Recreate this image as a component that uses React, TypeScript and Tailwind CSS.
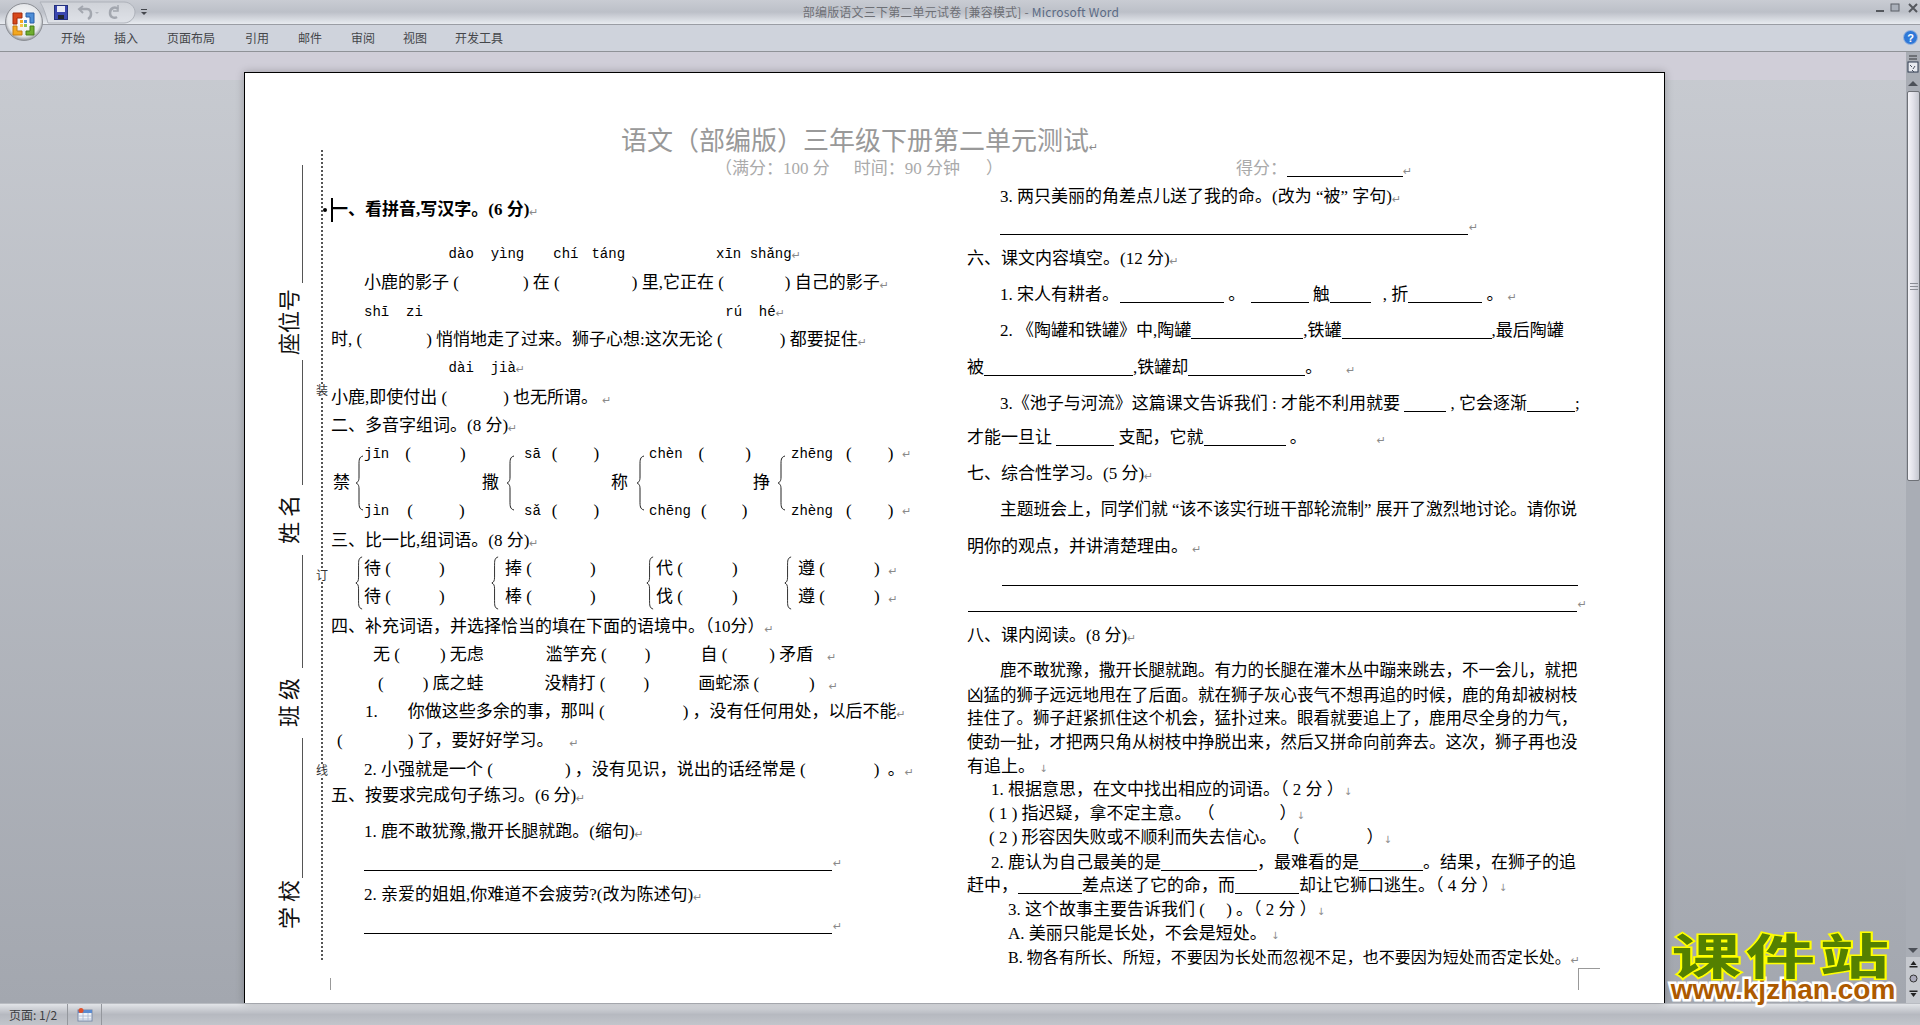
import React from "react";

const R = ({ c = "" }: { c?: string }) => (
  <span className={"inline-block text-[11px] leading-none text-[#8a8a8a] font-['DejaVu_Sans'] align-[-1px] " + c}>↵</span>
);
const D = ({ c = "" }: { c?: string }) => (
  <span className={"inline-block text-[10px] leading-none text-[#8a8a8a] font-['DejaVu_Sans'] " + c}>↓</span>
);
const G = ({ c }: { c: string }) => <span className={"inline-block " + c} />;
const U = ({ c }: { c: string }) => <span className={"inline-block h-[14px] border-b border-black align-[-3px] " + c} />;
const L = ({ c = "", children }: { c?: string; children?: React.ReactNode }) => (
  <div className={"h-5 leading-5 whitespace-pre " + c}>{children}</div>
);
const Py = ({ c = "", children }: { c?: string; children?: React.ReactNode }) => (
  <div className={"h-5 leading-5 whitespace-pre text-[14px] font-['Liberation_Mono'] " + c}>{children}</div>
);
const Rule = ({ c }: { c: string }) => <div className={"h-0 border-b border-black " + c} />;

const BraceTall = ({ c }: { c: string }) => (
  <svg viewBox="0 0 9 56" preserveAspectRatio="none" className={"shrink-0 " + c} fill="none" stroke="#222" strokeWidth="1">
    <path d="M8 1C4 2 4 5 4 10V22C4 26 3 27 1 28C3 29 4 30 4 34V46C4 51 4 54 8 55" />
  </svg>
);

function TopBar() {
  return (
    <div className="h-[25px] shrink-0 flex items-center justify-center bg-gradient-to-b from-[#c9ccd3] via-[#bcc0c8] to-[#e8ebf0] border-b border-[#9a9da4] relative">
      <span className="text-[12px] tracking-[0.2px] text-[#6d6f75] ml-[2px]">
        部编版语文三下第二单元试卷 [兼容模式] - <span className="text-[#5b6b85]">Microsoft Word</span>
      </span>
      <div className="absolute right-0 top-0 flex items-start">
        <svg width="60" height="16" viewBox="0 0 60 16" fill="none">
          <rect x="16" y="10" width="8" height="2" fill="#55585e" />
          <rect x="31" y="4" width="8" height="7" fill="#aab0ba" stroke="#5b5f66" />
          <path d="M49 4l8 8M57 4l-8 8" stroke="#55585e" strokeWidth="2" />
        </svg>
      </div>
    </div>
  );
}

function TabBar() {
  const tabs: [string, string][] = [
    ["开始", "ml-[61px]"],
    ["插入", "ml-[29px]"],
    ["页面布局", "ml-[29px]"],
    ["引用", "ml-[30px]"],
    ["邮件", "ml-[29px]"],
    ["审阅", "ml-[29px]"],
    ["视图", "ml-[28px]"],
    ["开发工具", "ml-[28px]"],
  ];
  return (
    <div className="h-[27px] shrink-0 flex items-center bg-[#cfd3dc] border-b border-[#8f9297] relative">
      {tabs.map(([t, m]) => (
        <span key={t} className={"text-[12px] text-[#44464a] " + m}>
          {t}
        </span>
      ))}
      <svg className="absolute right-[2px] top-[5px]" width="15" height="15" viewBox="0 0 15 15">
        <circle cx="7.5" cy="7.5" r="7" fill="#2f78d8" stroke="#9db7dd" />
        <text x="7.5" y="11.5" textAnchor="middle" fontSize="11" fontWeight="700" fill="#fff" fontFamily="Liberation Sans">?</text>
      </svg>
    </div>
  );
}

function OfficeButton() {
  return (
    <div className="absolute left-0 top-0 w-[150px] h-[45px]">
      <svg width="150" height="45" viewBox="0 0 150 45" fill="none">
        <defs>
          <radialGradient id="ob" cx="50%" cy="45%" r="55%">
            <stop offset="0" stopColor="#ffffff" />
            <stop offset="0.8" stopColor="#e5e7ea" />
            <stop offset="1" stopColor="#8f9298" />
          </radialGradient>
          <linearGradient id="qat" x1="0" y1="0" x2="0" y2="1">
            <stop offset="0" stopColor="#cfd2d8" />
            <stop offset="1" stopColor="#dfe2e8" />
          </linearGradient>
        </defs>
        <path d="M40 2H124C130 2 135 7 135 12C135 18 130 23 124 23H48C46 16 44 8 40 2Z" fill="url(#qat)" stroke="#aeb2ba" />
        <rect x="54.5" y="5.5" width="13" height="14" fill="#3a46b0" stroke="#23307c" />
        <rect x="57" y="6" width="8" height="6" fill="#e8eaf6" />
        <rect x="58" y="15" width="6" height="4" fill="#22262e" />
        <path d="M80 9H87C90 9 91 12 91 14C91 16 90 18 88 19" stroke="#a3a7af" strokeWidth="2.5" />
        <path d="M83 6L79 9L83 13" stroke="#a3a7af" strokeWidth="2" />
        <path d="M95 12L99 12L97 14Z" fill="#b0b4bb" />
        <path d="M118 9C115 6 110 8 110 13C110 17 114 19 117 17" stroke="#a3a7af" strokeWidth="2.5" />
        <path d="M118 5V11H113" stroke="#a3a7af" strokeWidth="1.5" />
        <rect x="141" y="9" width="6" height="1" fill="#44474d" />
        <path d="M141 12H147L144 15Z" fill="#44474d" />
        <circle cx="24" cy="22" r="18.5" fill="url(#ob)" stroke="#8d9096" />
        <path d="M13 13H22V18H17V24H13Z" fill="#d8481a" stroke="#a22a0c" />
        <path d="M26 13H34V23H30V17H26Z" fill="#4f8fd8" stroke="#2a5ea8" />
        <path d="M13 26H17V31H22V35H13Z" fill="#f3a81f" stroke="#c67c10" />
        <path d="M26 31H30V26H34V35H26Z" fill="#6fae2f" stroke="#487c18" />
        <rect x="20" y="20" width="3" height="3" fill="#f3a81f" />
        <rect x="24" y="20" width="3" height="3" fill="#4f8fd8" />
        <rect x="20" y="24" width="3" height="3" fill="#f7c64a" />
        <rect x="24" y="24" width="3" height="3" fill="#8cc252" />
      </svg>
    </div>
  );
}

function Gutter() {
  const vt = "[writing-mode:vertical-rl] [text-orientation:sideways] rotate-180 text-[22px] leading-none text-[#111] whitespace-pre font-['Noto_Sans_CJK_SC'] flex items-center justify-center";
  const ln = "w-px bg-[#555]";
  const box = " w-full flex justify-end pr-[5px]";
  return (
    <div className="w-[58px] shrink-0 flex flex-col items-end pt-[92px]">
      <div className={ln + " h-[118px]"} />
      <div className={"h-[77px]" + box}><span className={vt}>座位号</span></div>
      <div className={ln + " h-[125px]"} />
      <div className={"h-[70px]" + box}><span className={vt}>姓 名</span></div>
      <div className={ln + " h-[113px]"} />
      <div className={"h-[70px]" + box}><span className={vt}>班 级</span></div>
      <div className={ln + " h-[140px]"} />
      <div className={"h-[54px]" + box}><span className={vt}>学 校</span></div>
    </div>
  );
}

function DotCol() {
  const c = "relative z-10 text-[12px] leading-none bg-white text-[#333]";
  return (
    <div className="w-[10px] ml-[14px] shrink-0 flex flex-col items-center relative h-[810px] mt-[77px]">
      <div className="absolute inset-y-0 left-[4px] border-l-2 border-dotted border-[#555]" />
      <span className={c + " mt-[234px]"}>装</span>
      <span className={c + " mt-[173px]"}>订</span>
      <span className={c + " mt-[183px]"}>线</span>
    </div>
  );
}

type PG = { w: string; ch: string; chW: string; tm: string; up: string; upG: string; upP: string; lo: string; loG: string; loP: string; ret?: boolean };
function PolyGroup({ w, ch, chW, tm, up, upG, upP, lo, loG, loP, ret }: PG) {
  return (
    <div className={"flex items-center h-[77px] shrink-0 " + w}>
      <span className={"shrink-0 text-[17px] " + chW}>{ch}</span>
      <BraceTall c="w-[9px] h-[56px]" />
      <div className={"flex flex-col justify-between h-[77px] " + tm}>
        <div className="h-5 leading-5 flex">
          <span className="font-['Liberation_Mono'] text-[14px]">{up}</span>
          <span className={upG}>(</span>
          <span className={upP}>)</span>
          {ret && <R c="ml-[9px] mt-[5px]" />}
        </div>
        <div className="h-5 leading-5 flex">
          <span className="font-['Liberation_Mono'] text-[14px]">{lo}</span>
          <span className={loG}>(</span>
          <span className={loP}>)</span>
          {ret && <R c="ml-[9px] mt-[5px]" />}
        </div>
      </div>
    </div>
  );
}

function Pair({ w, a, b, m, tm, g, ret }: { w: string; a: string; b: string; m: string; tm: string; g: string; ret?: boolean }) {
  return (
    <div className={"flex items-center shrink-0 h-[48px] " + w}>
      <BraceTall c={"w-[8px] h-[54px] " + m} />
      <div className={"flex flex-col " + tm}>
        <div className="h-5 leading-5 mb-2 whitespace-pre">{a} (<G c={g} />){ret && <R c="ml-[9px]" />}</div>
        <div className="h-5 leading-5 whitespace-pre">{b} (<G c={g} />){ret && <R c="ml-[9px]" />}</div>
      </div>
    </div>
  );
}

function LeftCol() {
  return (
    <div className="w-[636px] shrink-0">
      <div className="relative h-5 leading-5 mt-[31px] font-bold whitespace-pre">
        <span className="absolute left-[-8px] top-[8px] w-[4px] h-[4px] rounded-full bg-black" />
        <span className="absolute left-0 top-[-2px] w-[2px] h-[24px] bg-black" />
        一、看拼音,写汉字。(6 分)<R c="font-normal" />
      </div>
      <Py c="mt-[24px]">{"              dào  yìng"}<G c="w-[29px]" />chí<G c="w-[13px]" />táng<G c="w-[91px]" />xīn shǎng<R /></Py>
      <L c="mt-[9px] pl-[33px]">小鹿的影子 (<G c="w-[64px]" />) 在 (<G c="w-[72px]" />) 里,它正在 (<G c="w-[61px]" />) 自己的影子<R /></L>
      <Py c="mt-[9px] pl-[33px]">{"shī  zi                                    rú  hé"}<R /></Py>
      <L c="mt-[8px]">时, (<G c="w-[64px]" />) 悄悄地走了过来。狮子心想:这次无论 (<G c="w-[57px]" />) 都要捉住<R /></L>
      <Py c="mt-[8px]">{"              dài  jià"}<R /></Py>
      <L c="mt-[10px]">小鹿,即使付出 (<G c="w-[56px]" />) 也无所谓。 <R /></L>
      <L c="mt-[8px]">二、多音字组词。(8 分)<R /></L>
      <div className="flex mt-[8px]">
        <PolyGroup w="w-[151px]" ch="禁" chW="w-[24px] pl-[2px]" tm="ml-[0px]" up="jīn" upG="ml-[16px]" upP="ml-[49px]" lo="jìn" loG="ml-[18px]" loP="ml-[46px]" />
        <PolyGroup w="w-[129px]" ch="撒" chW="w-[24px]" tm="ml-[9px]" up="sā" upG="ml-[11px]" upP="ml-[36px]" lo="sǎ" loG="ml-[11px]" loP="ml-[36px]" />
        <PolyGroup w="w-[142px]" ch="称" chW="w-[25px]" tm="ml-[4px]" up="chèn" upG="ml-[16px]" upP="ml-[41px]" lo="chēng" loG="ml-[10px]" loP="ml-[35px]" />
        <PolyGroup w="w-[170px]" ch="挣" chW="w-[24px]" tm="ml-[5px]" up="zhēng" upG="ml-[13px]" upP="ml-[36px]" lo="zhèng" loG="ml-[13px]" loP="ml-[36px]" ret />
      </div>
      <L c="mt-[10px]">三、比一比,组词语。(8 分)<R /></L>
      <div className="flex mt-[8px] text-[17px]">
        <Pair w="w-[160px]" m="ml-[24px]" tm="ml-[1px]" a="待" b="待" g="w-[48px]" />
        <Pair w="w-[155px]" m="ml-[0px]" tm="ml-[6px]" a="捧" b="棒" g="w-[58px]" />
        <Pair w="w-[138px]" m="ml-[0px]" tm="ml-[2px]" a="代" b="伐" g="w-[49px]" />
        <Pair w="w-[120px]" m="ml-[0px]" tm="ml-[6px]" a="遵" b="遵" g="w-[49px]" ret />
      </div>
      <L c="mt-[10px]">四、补充词语，并选择恰当的填在下面的语境中。（10分）<R /></L>
      <L c="mt-[8px] pl-[42px]">无 (<G c="w-[40px]" />) 无虑<G c="w-[62px]" />滥竽充 (<G c="w-[38px]" />)<G c="w-[50px]" />自 (<G c="w-[42px]" />) 矛盾<G c="w-[14px]" /><R /></L>
      <L c="mt-[9px] pl-[47px]">(<G c="w-[39px]" />) 底之蛙<G c="w-[61px]" />没精打 (<G c="w-[38px]" />)<G c="w-[49px]" />画蛇添 (<G c="w-[50px]" />)<G c="w-[14px]" /><R /></L>
      <L c="mt-[8px] pl-[34px]">1.<G c="w-[30px]" />你做这些多余的事，那叫 (<G c="w-[78px]" />) ，没有任何用处，以后不能<R /></L>
      <L c="mt-[9px] pl-[6px]">(<G c="w-[65px]" />) 了，要好好学习。<G c="w-[16px]" /><R /></L>
      <L c="mt-[9px] pl-[33px]">2. 小强就是一个 (<G c="w-[72px]" />) ，没有见识，说出的话经常是 (<G c="w-[68px]" />) <G c="w-[4px]" />。<R /></L>
      <L c="mt-[6px]">五、按要求完成句子练习。(6 分)<R /></L>
      <L c="mt-[16px] pl-[33px]">1. 鹿不敢犹豫,撒开长腿就跑。(缩句)<R /></L>
      <div className="flex items-end mt-[9px] ml-[33px] h-[20px]">
        <Rule c="w-[468px]" /><R c="ml-[1px] mb-[2px]" />
      </div>
      <L c="mt-[14px] pl-[33px]">2. 亲爱的姐姐,你难道不会疲劳?(改为陈述句)<R /></L>
      <div className="flex items-end mt-[9px] ml-[33px] h-[20px]">
        <Rule c="w-[468px]" /><R c="ml-[1px] mb-[2px]" />
      </div>
      <div className="w-px h-[12px] bg-[#999] mt-[44px] ml-[-1px]" />
    </div>
  );
}

function RightCol() {
  return (
    <div className="w-[620px] shrink-0">
      <L c="mt-[18px] pl-[33px]">3. 两只美丽的角差点儿送了我的命。(改为 “被” 字句)<R /></L>
      <div className="flex items-end mt-[8px] ml-[33px] h-[20px]">
        <Rule c="w-[468px]" /><R c="ml-[1px] mb-[2px]" />
      </div>
      <L c="mt-[14px]">六、课文内容填空。(12 分)<R /></L>
      <L c="mt-[16px] pl-[33px]">1. 宋人有耕者。<U c="w-[104px] ml-[1px]" /> 。 <U c="w-[58px] ml-[1px]" /> 触<U c="w-[41px]" /><G c="w-[12px]" />, 折<U c="w-[74px]" /> 。 <R /></L>
      <L c="mt-[16px] pl-[33px]">2. 《陶罐和铁罐》中,陶罐<U c="w-[112px]" />,铁罐<U c="w-[150px]" />,最后陶罐</L>
      <L c="mt-[17px]">被<U c="w-[149px]" />,铁罐却<U c="w-[117px]" />。<G c="w-[24px]" /><R /></L>
      <L c="mt-[16px] pl-[33px]">3.《池子与河流》这篇课文告诉我们 : 才能不利用就要 <U c="w-[42px]" /> , 它会逐渐<U c="w-[48px]" />;</L>
      <L c="mt-[14px]">才能一旦让 <U c="w-[58px]" /> 支配，它就<U c="w-[82px]" /> 。<G c="w-[70px]" /><R /></L>
      <L c="mt-[16px]">七、综合性学习。(5 分)<R /></L>
      <L c="mt-[16px] pl-[33px] text-[16.8px]">主题班会上，同学们就 “该不该实行班干部轮流制” 展开了激烈地讨论。请你说</L>
      <L c="mt-[17px]">明你的观点，并讲清楚理由。 <R /></L>
      <Rule c="mt-[28px] ml-[35px] w-[576px]" />
      <div className="flex items-end mt-[6px] h-[20px]">
        <Rule c="ml-[1px] w-[610px]" /><R c="ml-[1px] mb-[2px]" />
      </div>
      <L c="mt-[14px]">八、课内阅读。(8 分)<R /></L>
      <L c="mt-[15px] pl-[33px] text-[16.5px]">鹿不敢犹豫，撒开长腿就跑。有力的长腿在灌木丛中蹦来跳去，不一会儿，就把</L>
      <L c="mt-[5px] text-[16.5px]">凶猛的狮子远远地甩在了后面。就在狮子灰心丧气不想再追的时候，鹿的角却被树枝</L>
      <L c="mt-[3px] text-[16.5px]">挂住了。狮子赶紧抓住这个机会，猛扑过来。眼看就要追上了，鹿用尽全身的力气，</L>
      <L c="mt-[4px] text-[16.5px]">使劲一扯，才把两只角从树枝中挣脱出来，然后又拼命向前奔去。这次，狮子再也没</L>
      <L c="mt-[4px]">有追上。 <D /></L>
      <L c="mt-[3px] pl-[24px]">1. 根据意思，在文中找出相应的词语。（ 2 分 ）<D /></L>
      <L c="mt-[4px] pl-[22px]">( 1 ) 指迟疑，拿不定主意。<G c="w-[6px]" />（<G c="w-[65px]" />）<D /></L>
      <L c="mt-[4px] pl-[22px]">( 2 ) 形容因失败或不顺利而失去信心。<G c="w-[6px]" />（<G c="w-[67px]" />）<D /></L>
      <L c="mt-[5px] pl-[24px]">2. 鹿认为自己最美的是<U c="w-[96px]" />，最难看的是<U c="w-[64px]" />。结果，在狮子的追</L>
      <L c="mt-[3px]">赶中，<U c="w-[64px]" />差点送了它的命，而<U c="w-[64px]" />却让它狮口逃生。（ 4 分 ）<D /></L>
      <L c="mt-[4px] pl-[41px]">3. 这个故事主要告诉我们 ( <G c="w-[17px]" />) 。（ 2 分 ）<D /></L>
      <L c="mt-[4px] pl-[41px]">A. 美丽只能是长处，不会是短处。 <D /></L>
      <L c="mt-[4px] pl-[41px] text-[16px]">B. 物各有所长、所短，不要因为长处而忽视不足，也不要因为短处而否定长处。<R /></L>
      <div className="ml-[611px] w-[22px] h-[22px] border-l border-t border-[#999]" />
    </div>
  );
}

function Page() {
  return (
    <div className="ml-[244px] w-[1421px] shrink-0 bg-white border border-b-0 border-black shadow-[0_0_8px_rgba(0,0,0,0.25)] overflow-hidden flex">
      <Gutter />
      <DotCol />
      <div className="flex-1 ml-[4px] text-[17px] leading-5 text-black font-['Liberation_Serif','Noto_Sans_CJK_SC',serif]">
        <div className="h-[110px]">
          <div className="pt-[52px] pl-[290px] text-[26px] leading-[34px] text-[#999] whitespace-pre">语文（部编版）三年级下册第二单元测试<R /></div>
          <div className="pl-[384px] text-[17px] leading-5 text-[#aaa] whitespace-pre">（满分：100 分<G c="w-[24px]" />时间：90 分钟<G c="w-[26px]" />）<G c="w-[233px]" />得分：<U c="w-[116px] border-[#999]" /><R /></div>
        </div>
        <div className="flex mt-[-14px]">
          <LeftCol />
          <RightCol />
        </div>
      </div>
    </div>
  );
}

function Scrollbar() {
  return (
    <div className="absolute right-0 top-0 bottom-0 w-[14px] flex flex-col bg-[#a9adb5]">
      <div className="h-[5px] mt-[3px] mx-[3px] border-y-2 border-[#6e7177]" />
      <svg className="mt-[1px] ml-[1px]" width="12" height="14" viewBox="0 0 12 14">
        <rect x="1" y="1" width="10" height="10" fill="#e8eaf0" stroke="#2f3a50" />
        <path d="M3 4l2 2M8 5l-2 3M5 9l2 2" stroke="#4a5060" />
      </svg>
      <div className="h-[16px] flex items-center justify-center">
        <div className="w-0 h-0 border-x-[5px] border-x-transparent border-b-[5px] border-b-[#4c5058]" />
      </div>
      <div className="h-[390px] ml-[1px] border border-[#6e7177] rounded-[2px] bg-gradient-to-r from-[#f4f4f8] via-[#e0e0e8] to-[#c4c7cf] flex items-center justify-center">
        <div className="w-[8px] h-[7px] border-y border-[#8a8d95] flex items-center"><div className="w-full h-px bg-[#8a8d95]" /></div>
      </div>
      <div className="flex-1" />
      <div className="h-[14px] flex items-center justify-center">
        <div className="w-0 h-0 border-x-[5px] border-x-transparent border-t-[5px] border-t-[#4c5058]" />
      </div>
      <div className="h-[46px] bg-[#c6c9cf] flex flex-col items-center justify-around pb-[2px] text-[#222]">
        <svg width="9" height="9" viewBox="0 0 9 9" fill="#222"><path d="M4.5 1L7.5 5H1.5Z" /><rect x="0.5" y="6" width="8" height="1.5" /></svg>
        <svg width="9" height="9" viewBox="0 0 9 9"><circle cx="4.5" cy="4.5" r="3.5" fill="#aab" stroke="#333" /></svg>
        <svg width="9" height="9" viewBox="0 0 9 9" fill="#222"><rect x="0.5" y="1.5" width="8" height="1.5" /><path d="M4.5 8L7.5 4H1.5Z" /></svg>
      </div>
    </div>
  );
}

function StatusBar() {
  return (
    <div className="h-[22px] shrink-0 flex items-center bg-gradient-to-b from-[#e2e4e8] via-[#b6b9c0] to-[#c2c5cb] border-t border-[#b9bcc2] text-[12px] text-[#3c3e42]">
      <span className="w-[68px] pl-[9px] h-full flex items-center border-r border-[#94979d] font-['Noto_Sans_CJK_SC']">页面: 1/2</span>
      <span className="w-[34px] h-full flex items-center justify-center border-r border-[#94979d]">
        <svg width="16" height="15" viewBox="0 0 16 15">
          <rect x="1" y="3" width="14" height="11" fill="#eef2f8" stroke="#7a8aa8" />
          <rect x="1" y="3" width="14" height="3" fill="#5b8bd0" />
          <path d="M1 9H15M1 12H15M6 6V14M11 6V14" stroke="#a8b8d0" strokeWidth="0.8" />
          <circle cx="4" cy="3.5" r="2.5" fill="#e0502a" />
        </svg>
      </span>
    </div>
  );
}

function Watermark() {
  return (
    <div className="absolute right-[22px] bottom-[23px] w-[230px] flex flex-col items-center pointer-events-none">
      <div className="text-[48px] leading-[50px] font-bold text-[#548000] tracking-[3px] whitespace-pre scale-x-[1.45] font-['Noto_Sans_CJK_SC'] [-webkit-text-stroke:3px_#ffff00] [paint-order:stroke_fill]">课件站</div>
      <div className="text-[28px] leading-[24px] font-bold text-[#ad5a00] font-['Liberation_Sans'] whitespace-pre [-webkit-text-stroke:5px_#ffffff] [paint-order:stroke_fill]">www.kjzhan.com</div>
    </div>
  );
}

export default function App() {
  return (
    <div className="w-[1920px] h-[1025px] relative overflow-hidden flex flex-col bg-[#bfc2c9] font-['Noto_Sans_CJK_SC',sans-serif]">
      <TopBar />
      <TabBar />
      <div className="flex-1 min-h-0 relative flex pt-[20px] bg-gradient-to-b from-[#c8cbd1] to-[#a3a7af]">
        <div className="absolute inset-x-0 top-0 h-[28px] bg-[#d0ced8]" />
        <div className="relative flex w-full min-h-0"><Page /></div>
        <Scrollbar />
      </div>
      <StatusBar />
      <OfficeButton />
      <Watermark />
    </div>
  );
}
